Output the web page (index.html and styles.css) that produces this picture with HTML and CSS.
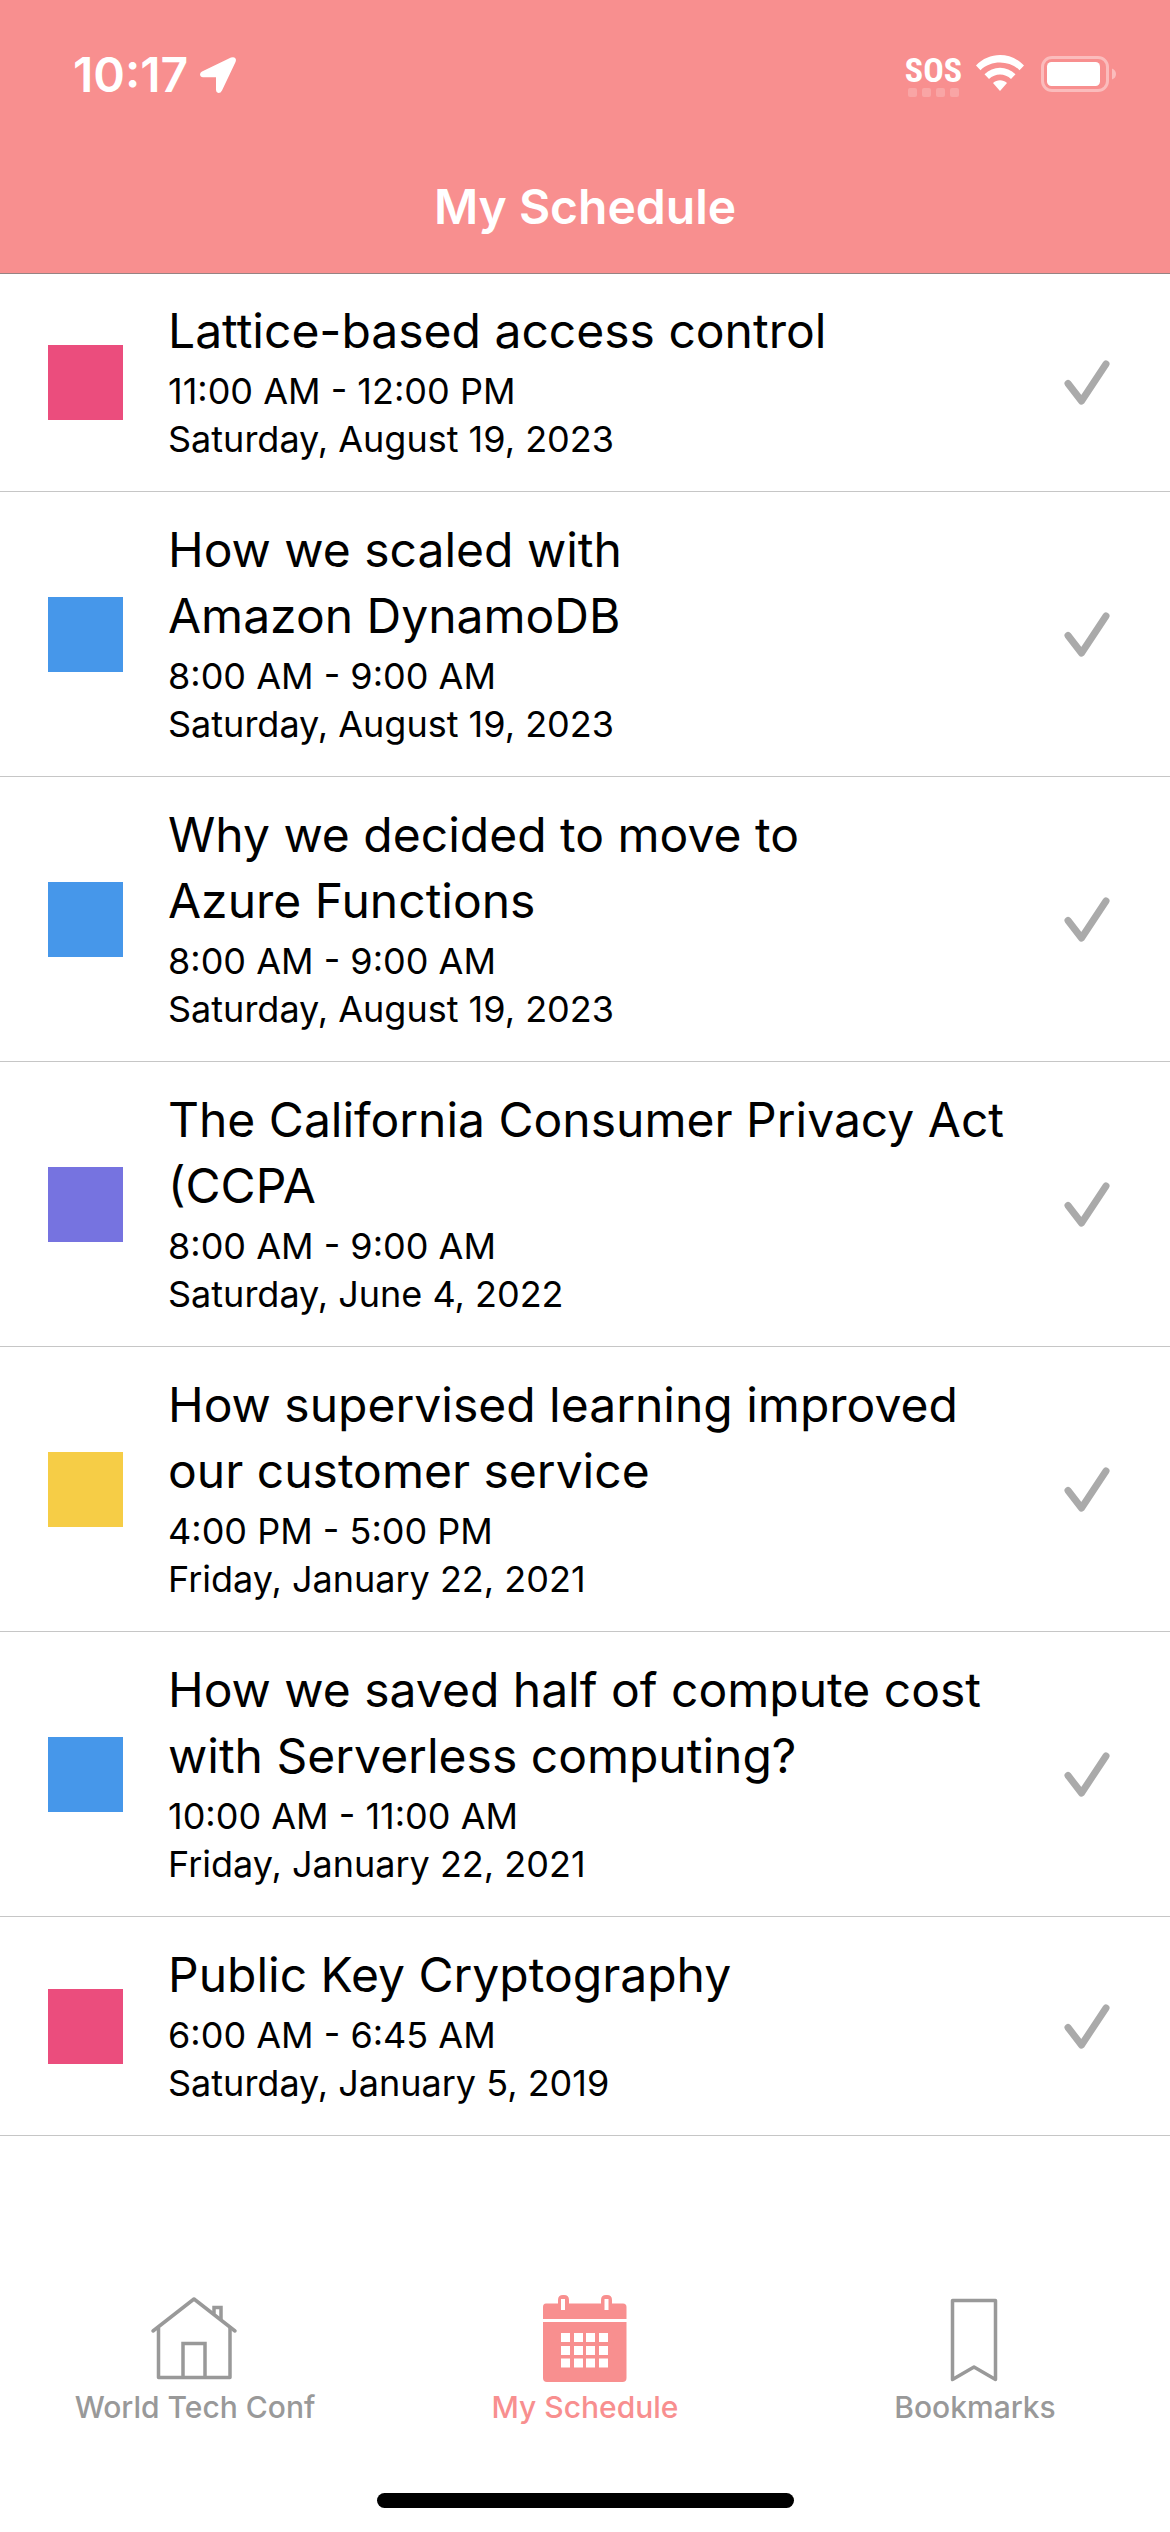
FILE: index.html
```html
<!DOCTYPE html>
<html lang="en">
<head>
<meta charset="utf-8">
<meta name="viewport" content="width=device-width, initial-scale=1">
<title>My Schedule</title>
<link rel="stylesheet" href="styles.css">
</head>
<body>
<svg width="0" height="0" class="sprite" aria-hidden="true">
  <symbol id="check" viewBox="0 0 46 46"><path d="M4 23.500L17.500 41L42 4" fill="none" stroke="currentColor" stroke-width="7" stroke-linecap="round" stroke-linejoin="round"/></symbol>
</svg>
<div class="app">
  <header class="header">
    <div class="status">
      <div class="status-left">
        <span class="clock">10:17</span>
        <svg class="location" viewBox="0 0 36 36" width="36" height="36" aria-hidden="true"><path d="M2 14.500L31 .6Q34-.5 35.500 1.500Q36.500 3 35.300 5.500L22 33.500Q20.800 36 18.500 36Q16 35.500 16 32.500V20.200H3Q.2 20 0 17.500Q0 15.500 2 14.500Z" fill="currentColor"/></svg>
      </div>
      <div class="status-right">
        <div class="signal">
          <span class="sos">SOS</span>
          <span class="dots"><i></i><i></i><i></i><i></i></span>
        </div>
        <svg class="wifi" viewBox="0 0 48 36" width="48" height="36" aria-hidden="true"><g fill="currentColor"><path d="M0 10.500C13-3.500 35-3.500 48 10.500L43.500 15.200C33 5 15 5 4.500 15.200Z"/><path d="M8.500 19.200C17 10.500 31 10.500 39.500 19.200L35 24C29 18 19 18 13 24Z"/><path d="M17 28C21 24.300 27 24.300 31 28L24 36Z"/></g></svg>
        <svg class="battery" viewBox="0 0 75 36" width="75" height="36" aria-hidden="true"><rect x="1.500" y="1.500" width="65" height="33" rx="9.500" fill="none" stroke="#fff" stroke-opacity=".4" stroke-width="3"/><rect x="6" y="6" width="53" height="24" rx="4.500" fill="#fff"/><path d="M71 12.500Q75 14 75 18T71 23.500Z" fill="#fff" fill-opacity=".4"/></svg>
      </div>
    </div>
    <h1 class="title">My Schedule</h1>
  </header>

  <main class="content">
    <ul class="sessions">
      <li class="session">
        <span class="swatch pink"></span>
        <div class="details"><h2>Lattice-based access control</h2><p>11:00 AM - 12:00 PM</p><p>Saturday, August 19, 2023</p></div>
        <svg class="check" role="img" aria-label="Added"><use href="#check"/></svg>
      </li>
      <li class="session">
        <span class="swatch blue"></span>
        <div class="details"><h2>How we scaled with<br>Amazon DynamoDB</h2><p>8:00 AM - 9:00 AM</p><p>Saturday, August 19, 2023</p></div>
        <svg class="check" role="img" aria-label="Added"><use href="#check"/></svg>
      </li>
      <li class="session">
        <span class="swatch blue"></span>
        <div class="details"><h2>Why we decided to move to<br>Azure Functions</h2><p>8:00 AM - 9:00 AM</p><p>Saturday, August 19, 2023</p></div>
        <svg class="check" role="img" aria-label="Added"><use href="#check"/></svg>
      </li>
      <li class="session">
        <span class="swatch purple"></span>
        <div class="details"><h2>The California Consumer Privacy Act (CCPA</h2><p>8:00 AM - 9:00 AM</p><p>Saturday, June 4, 2022</p></div>
        <svg class="check" role="img" aria-label="Added"><use href="#check"/></svg>
      </li>
      <li class="session">
        <span class="swatch yellow"></span>
        <div class="details"><h2>How supervised learning improved our customer service</h2><p>4:00 PM - 5:00 PM</p><p>Friday, January 22, 2021</p></div>
        <svg class="check" role="img" aria-label="Added"><use href="#check"/></svg>
      </li>
      <li class="session">
        <span class="swatch blue"></span>
        <div class="details"><h2>How we saved half of compute cost with Serverless computing?</h2><p>10:00 AM - 11:00 AM</p><p>Friday, January 22, 2021</p></div>
        <svg class="check" role="img" aria-label="Added"><use href="#check"/></svg>
      </li>
      <li class="session">
        <span class="swatch pink"></span>
        <div class="details"><h2>Public Key Cryptography</h2><p>6:00 AM - 6:45 AM</p><p>Saturday, January 5, 2019</p></div>
        <svg class="check" role="img" aria-label="Added"><use href="#check"/></svg>
      </li>
    </ul>
  </main>

  <footer class="footer">
    <nav class="tabs">
      <a class="tab" href="#conf">
        <svg viewBox="0 0 90 90" width="90" height="90" aria-hidden="true"><g fill="none" stroke="currentColor" stroke-width="3.500" stroke-linecap="round" stroke-linejoin="round"><path d="M3 36L44 4L85 36"/><path d="M8.500 33V82.500H80V33"/><path d="M33 82V48.500H55V82" stroke-linejoin="miter"/><path d="M64 18V12.500H71V24" stroke-linejoin="miter"/></g></svg>
        <span>World Tech Conf</span>
      </a>
      <a class="tab active" href="#schedule" aria-current="page">
        <svg viewBox="0 0 90 90" width="90" height="90" aria-hidden="true"><g fill="currentColor"><path fill-rule="evenodd" d="M6 8.500H18V5Q18 0 23 0H24Q29 0 29 5V8.500H61V5Q61 0 66 0H67Q72 0 72 5V8.500H83Q86.500 8.500 86.500 12V24H3V12Q3 8.500 6 8.500ZM21 4V15H25V4ZM64.500 4V15H68.500V4Z"/><path fill-rule="evenodd" d="M3 27H86.500V83Q86.500 87 82.500 87H7Q3 87 3 83ZM21 38V47H30V38ZM34 38V47H43V38ZM46 38V47H55V38ZM59 38V47H68V38ZM21 51V60H30V51ZM34 51V60H43V51ZM46 51V60H55V51ZM59 51V60H68V51ZM21 63.500V72.500H30V63.500ZM34 63.500V72.500H43V63.500ZM46 63.500V72.500H55V63.500ZM59 63.500V72.500H68V63.500Z"/></g></svg>
        <span>My Schedule</span>
      </a>
      <a class="tab" href="#bookmarks">
        <svg viewBox="0 0 90 90" width="90" height="90" aria-hidden="true"><path d="M22.500 5.500H65.500V84.500L44 72L22.500 84.500Z" fill="none" stroke="currentColor" stroke-width="3.500" stroke-linejoin="round"/></svg>
        <span>Bookmarks</span>
      </a>
    </nav>
    <div class="home-bar"></div>
  </footer>
</div>
</body>
</html>
```
FILE: styles.css
```css
* { box-sizing: border-box; }

body {
  margin: 0;
  background: #fff;
  color: #000;
  font-family: Inter, "Liberation Sans", sans-serif;
}

h1, h2, p, ul { margin: 0; padding: 0; font-weight: 400; }
.sprite { position: absolute; }

.app { display: flex; flex-direction: column; min-height: 100vh; }

.header {
  background: #f88f8f;
  color: #fff;
  box-shadow: 0 1px 0 #968383;
  z-index: 1;
}

.status {
  display: flex;
  justify-content: space-between;
  padding: 46px 54px 0 73px;
  height: 141px;
}
.status-left, .status-right { display: flex; align-items: flex-start; }
.clock { font-size: 48px; line-height: 58px; font-weight: 600; }
.location { margin: 11px 0 0 12px; }
.signal { display: flex; flex-direction: column; align-items: center; margin: 8px 14px 0 0; }
.sos {
  font-family: "Liberation Sans Narrow", "Roboto Condensed", "Liberation Sans", sans-serif;
  font-size: 34px;
  line-height: 32px;
  font-weight: 700;
}
.dots { display: flex; gap: 5px; margin-top: 2px; }
.dots i { width: 9px; height: 9px; border-radius: 2px; background: rgba(255, 255, 255, .2); }
.wifi { margin: 9px 17px 0 0; }
.battery { margin-top: 10px; }

.title {
  font-size: 48px;
  line-height: 132px;
  font-weight: 600;
  text-align: center;
}

.content { flex: 1; }
.sessions { list-style: none; }
.session {
  display: flex;
  align-items: center;
  padding: 25px 60px 24px 48px;
  border-bottom: 1px solid #c6c6c6;
}
.swatch { flex: none; width: 75px; height: 75px; margin-right: 45px; }
.pink { background: #eb4d7d; }
.blue { background: #4697ea; }
.purple { background: #7673e0; }
.yellow { background: #f6cd46; }
.details { flex: 1; padding: 0 40px 4px 0; }
.details h2 { font-size: 48px; line-height: 66px; margin-bottom: 3px; }
.details p { font-size: 36px; line-height: 48px; }
.check { flex: none; width: 46px; height: 46px; color: #aaa; }

.footer { padding-bottom: 24px; }
.tabs { display: grid; grid-template-columns: repeat(3, 1fr); }
.tab {
  display: flex;
  flex-direction: column;
  align-items: center;
  color: #999;
  font-size: 30px;
  line-height: 42px;
  font-weight: 500;
  text-decoration: none;
}
.tab svg { margin-bottom: 1px; }
.tab.active { color: #f88f8f; }
.home-bar {
  width: 417px;
  max-width: 40%;
  height: 15px;
  margin: 65px auto 0;
  border-radius: 8px;
  background: #000;
}
```
